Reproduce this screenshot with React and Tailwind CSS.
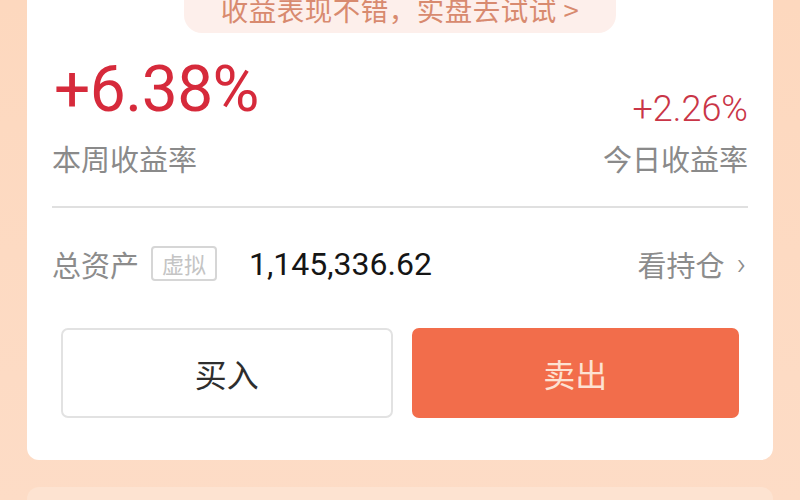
export default function App() {
  const cjk = { fontFamily: '"Noto Sans CJK SC", "Noto Sans", sans-serif' };
  const num = { fontFamily: 'Roboto, "Noto Sans CJK SC", sans-serif' };
  return (
    <div className="w-[800px] h-[500px] overflow-hidden bg-gradient-to-b from-[#fdd8be] to-[#fddcc6]" style={cjk}>
      <div className="mx-[27px] h-[460px] bg-white rounded-b-[12px] flex flex-col overflow-hidden">
        <div className="mx-auto -mt-[17px] w-[432px] h-[50px] rounded-[18px] bg-[#fdefeb] flex items-center justify-center">
          <span className="mt-[2px] text-[27.5px] leading-[30px] text-[#d88a6f] tracking-[0.5px]">收益表现不错，实盘去试试 &gt;</span>
        </div>
        <div className="mx-[25px] mt-[25px] flex justify-between items-end">
          <div className="flex flex-col">
            <span className="ml-[2px] text-[64px] leading-[64px] text-[#d62a3b] tracking-[-0.5px]" style={num}>+6.38%</span>
            <span className="mt-[20px] text-[29px] leading-[32px] text-[#8a8a8a]">本周收益率</span>
          </div>
          <div className="flex flex-col items-end">
            <span className="text-[36px] leading-[38px] font-light text-[#c93547]" style={num}>+2.26%</span>
            <span className="mt-[14px] text-[29px] leading-[32px] text-[#8a8a8a]">今日收益率</span>
          </div>
        </div>
        <div className="mx-[25px] mt-[32px] h-[2px] bg-[#e0e0e0]" />
        <div className="mx-[25px] mt-[38px] flex items-center">
          <span className="text-[29px] leading-[32px] text-[#8c8c8c]">总资产</span>
          <span className="ml-[12px] w-[66px] h-[35px] border-2 border-[#d6d6d6] rounded-[4px] flex items-center justify-center text-[22px] text-[#c4c4c4]">虚拟</span>
          <span className="ml-[32px] text-[32px] leading-[34px] text-[#151515]" style={num}>1,145,336.62</span>
          <span className="ml-auto flex items-center text-[29px] leading-[32px] text-[#8c8c8c]">看持仓<span className="ml-[12px] mr-[2px] text-[32px] font-light" style={num}>›</span></span>
        </div>
        <div className="mx-[34px] mt-[47px] flex gap-[19px]">
          <button className="flex-1 h-[90px] rounded-[7px] border-2 border-[#e2e2e2] bg-white text-[32px] text-[#2e2e2e]" style={cjk}>买入</button>
          <button className="flex-1 h-[90px] rounded-[7px] bg-[#f26d4b] text-[32px] text-[#fde2d2]" style={cjk}>卖出</button>
        </div>
      </div>
      <div className="mx-[27px] mt-[27px] h-[40px] rounded-t-[12px] bg-[#fde3d1]" />
    </div>
  );
}
